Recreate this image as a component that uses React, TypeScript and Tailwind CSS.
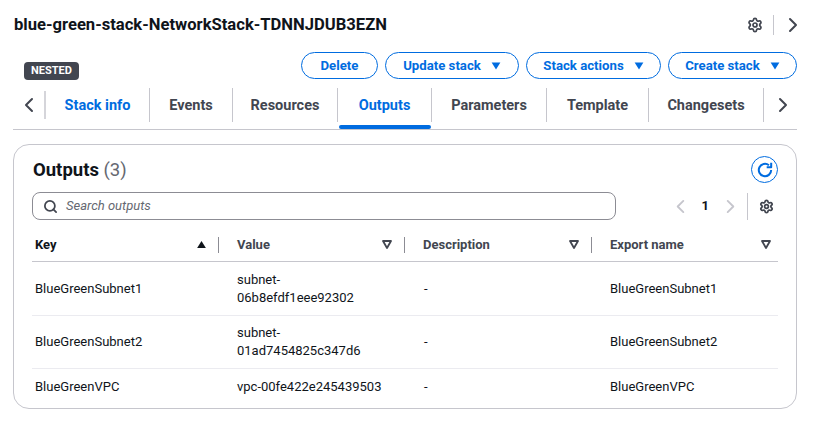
import { Search, Settings } from "lucide-react";

const tabs = [
  { label: "Stack info", width: "w-[104px]", color: "text-[#006ce0]" },
  { label: "Events", width: "w-[83px]", color: "text-[#424650]" },
  { label: "Resources", width: "w-[105px]", color: "text-[#424650]" },
  { label: "Outputs", width: "w-[94px]", color: "text-[#006ce0]", active: true },
  { label: "Parameters", width: "w-[115px]", color: "text-[#424650]" },
  { label: "Template", width: "w-[102px]", color: "text-[#424650]" },
  { label: "Changesets", width: "w-[115px]", color: "text-[#424650]" },
];

const rows = [
  { key: "BlueGreenSubnet1", value: ["subnet-", "06b8efdf1eee92302"], height: "h-[54px]" },
  { key: "BlueGreenSubnet2", value: ["subnet-", "01ad7454825c347d6"], height: "h-[53px] pb-px" },
  { key: "BlueGreenVPC", value: ["vpc-00fe422e245439503"], height: "h-[36px] pb-px", last: true },
];

function Chevron({ dir, className }: { dir: "left" | "right"; className: string }) {
  return (
    <svg viewBox="0 0 16 16" className={className} fill="none" stroke="currentColor" strokeWidth="2" strokeLinecap="round" strokeLinejoin="round">
      <path d={dir === "left" ? "M11 2 5 8l6 6" : "M5 2l6 6-6 6"} />
    </svg>
  );
}

function Caret({ className }: { className: string }) {
  return (
    <svg viewBox="0 0 12 10" className={className} fill="currentColor">
      <path d="M0.5 0.5h11L6 9.5z" />
    </svg>
  );
}

function SortDown() {
  return (
    <svg viewBox="0 0 10 9" className="w-[10px] h-[9px] text-[#424650]" fill="none" stroke="currentColor" strokeWidth="1.8" strokeLinejoin="round">
      <path d="M1 1h8L5 8z" />
    </svg>
  );
}

function ActionButton({ label, width }: { label: string; width: string }) {
  return (
    <button className={`${width} h-[27px] rounded-full border border-[#006ce0] text-[#006ce0] text-[13.2px] font-bold flex items-center justify-center gap-[10px]`}>
      {label}
      {label !== "Delete" && <Caret className="w-[10px] h-[8px]" />}
    </button>
  );
}

function HeaderCell({ label, sep, sorted }: { label: string; sep?: boolean; sorted?: boolean }) {
  return (
    <div className="relative flex items-center justify-between pt-[2px] pl-[18px] pr-[13px] first:pl-[3px] last:pr-[7px] h-[35px] text-[13px] font-bold text-[#424650]">
      <span className={sorted ? "text-[#0f141a]" : ""}>{label}</span>
      {sorted ? (
        <svg viewBox="0 0 10 8" className="w-[9px] h-[7px] text-[#0f141a]" fill="currentColor">
          <path d="M5 0l5 8H0z" />
        </svg>
      ) : (
        <SortDown />
      )}
      {sep && <span className="absolute -left-px top-[11px] h-4 w-px bg-[#8c8c94]" />}
    </div>
  );
}

export default function App() {
  return (
    <div className="w-[816px] h-[440px] bg-white overflow-hidden pl-[13px] pr-[19px] text-[#0f141a] font-['Roboto',sans-serif]">
      <div className="flex items-center justify-between h-[50px] pl-px">
        <h1 className="text-[16.6px] font-bold">blue-green-stack-NetworkStack-TDNNJDUB3EZN</h1>
        <div className="flex items-center text-[#424650]">
          <Settings size={16} strokeWidth={2.6} />
          <span className="w-px h-5 bg-[#c6c6cd] ml-[10px] mr-[11px]" />
          <Chevron dir="right" className="w-4 h-4 -mr-[4px]" />
        </div>
      </div>

      <div className="flex items-end justify-between pl-[11px] h-[28px] mt-[2px]">
        <span className="h-[18px] w-[55px] rounded-[4px] bg-[#424650] text-white text-[11px] font-bold flex items-center justify-center">
          NESTED
        </span>
        <div className="flex items-center gap-[7px] pb-px">
          <ActionButton label="Delete" width="w-[77px]" />
          <ActionButton label="Update stack" width="w-[134px]" />
          <ActionButton label="Stack actions" width="w-[135px]" />
          <ActionButton label="Create stack" width="w-[129px]" />
        </div>
      </div>

      <div className="flex items-start h-[42px] mt-[8px] border-b border-[#c6c6cd]">
        <div className="w-[33px] h-[28px] mt-[3px] flex items-center justify-center pl-px shrink-0 text-[#424650] border-r-2 border-[#d5d5da]">
          <Chevron dir="left" className="w-4 h-4" />
        </div>
        {tabs.map((tab) => (
          <div key={tab.label} className={`${tab.width} relative h-[34px] pt-[2px] shrink-0 flex items-center justify-center border-r border-[#c6c6cd] text-[14.5px] font-bold ${tab.color}`}>
            {tab.label}
            {tab.active && <span className="absolute -bottom-[7px] left-px right-0 h-1 rounded-[2px] bg-[#006ce0]" />}
          </div>
        ))}
        <div className="flex-1 h-[34px] flex items-center justify-end pr-[6px] text-[#424650]">
          <Chevron dir="right" className="w-4 h-4" />
        </div>
      </div>

      <div className="mt-[14px] h-[265px] rounded-[16px] border border-[#c6c6cd] px-[18px]">
        <div className="flex items-center justify-between h-[47px] pt-[2px]">
          <h2 className="text-[18.5px] font-bold pl-px pt-[2px]">
            Outputs <span className="font-normal text-[#656871]">(3)</span>
          </h2>
          <button className="w-[27px] h-[27px] rounded-full border border-[#006ce0] text-[#006ce0] flex items-center justify-center">
            <svg viewBox="0 0 16 16" className="w-[18px] h-[18px]" fill="none" stroke="currentColor" strokeWidth="1.8">
              <path d="M13.5 8A5.5 5.5 0 1 1 11.5 3.8" />
              <path d="M9.5 5.5h4v-4" strokeLinejoin="round" />
            </svg>
          </button>
        </div>

        <div className="flex items-center h-[28px]">
          <div className="w-[584px] h-[28px] rounded-[8px] border border-[#8c8c94] flex items-center pl-[10px] gap-[8px]">
            <Search size={15} strokeWidth={2.8} className="text-[#424650]" />
            <span className="text-[13px] italic text-[#656871]">Search outputs</span>
          </div>
          <div className="flex-1 flex items-center justify-end text-[#c6c6cd]">
            <Chevron dir="left" className="w-[15px] h-[15px]" />
            <span className="ml-[14px] mr-[14px] text-[13px] font-bold text-[#0f141a]">1</span>
            <Chevron dir="right" className="w-[15px] h-[15px]" />
            <span className="w-px h-[27px] bg-[#c6c6cd] ml-[9px] mr-[11px]" />
            <Settings size={15} strokeWidth={2.8} className="text-[#424650] mr-[4px]" />
          </div>
        </div>

        <div className="grid grid-cols-[187px_186px_187px_186px] mt-[6px] border-b border-[#c6c6cd]">
          <HeaderCell label="Key" sorted />
          <HeaderCell label="Value" sep />
          <HeaderCell label="Description" sep />
          <HeaderCell label="Export name" sep />
        </div>

        {rows.map((row) => (
          <div key={row.key} className={`grid grid-cols-[187px_186px_187px_186px] items-center text-[13px] leading-[18px] ${row.height} ${row.last ? "" : "border-b border-[#ebebf0]"}`}>
            <span className="pl-[3px]">{row.key}</span>
            <span className="pl-[18px]">
              {row.value.map((line) => (
                <span key={line} className="block">{line}</span>
              ))}
            </span>
            <span className="pl-[19px]">-</span>
            <span className="pl-[18px]">{row.key}</span>
          </div>
        ))}
      </div>
    </div>
  );
}
